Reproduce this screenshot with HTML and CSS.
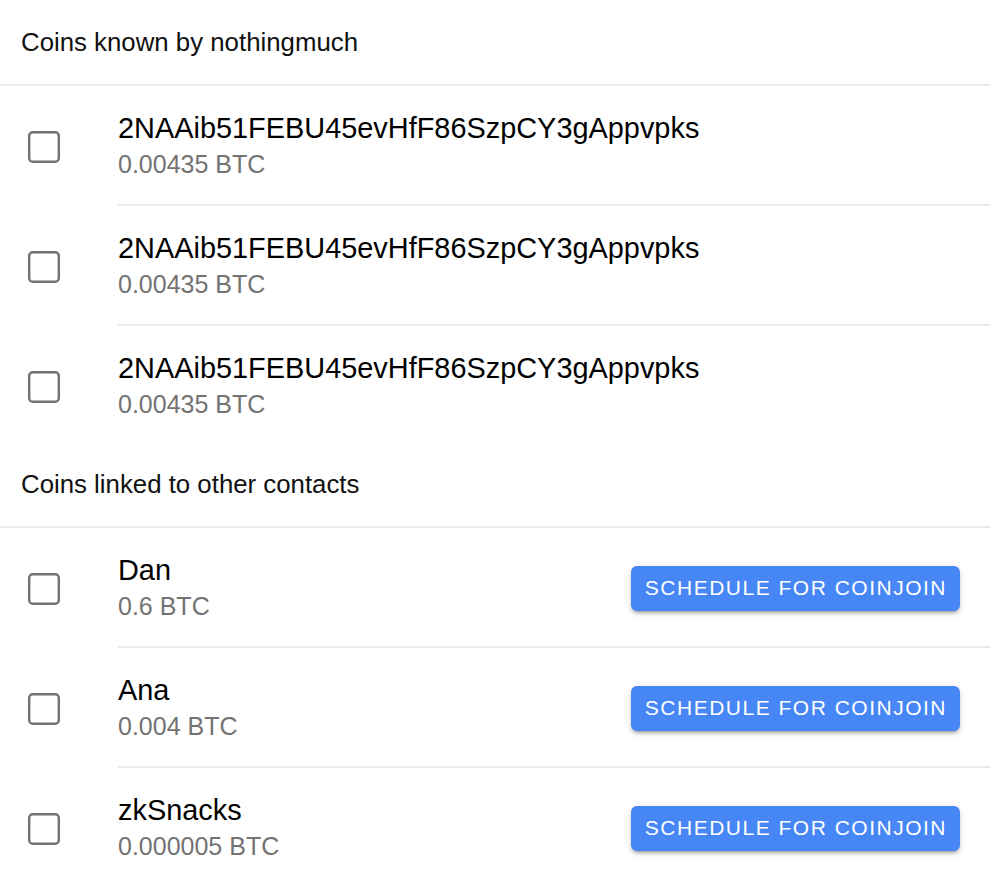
FILE: index.html
```html
<!DOCTYPE html>
<html lang="en">
<head>
<meta charset="utf-8">
<title>Coins</title>
<link rel="stylesheet" href="styles.css">
</head>
<body>
<div class="page">
  <section class="group group--first">
    <div class="subheader">Coins known by nothingmuch</div>
    <ul class="list">
      <li class="item">
        <div class="item-check"><svg class="checkbox" viewBox="0 0 32 32" width="32" height="32"><rect x="1.2" y="1.2" width="29.6" height="29.6" rx="3.5" ry="3.5"/></svg></div>
        <div class="item-body">
          <div class="item-text">
            <div class="primary">2NAAib51FEBU45evHfF86SzpCY3gAppvpks</div>
            <div class="secondary">0.00435 BTC</div>
          </div>
        </div>
      </li>
      <li class="item">
        <div class="item-check"><svg class="checkbox" viewBox="0 0 32 32" width="32" height="32"><rect x="1.2" y="1.2" width="29.6" height="29.6" rx="3.5" ry="3.5"/></svg></div>
        <div class="item-body">
          <div class="item-text">
            <div class="primary">2NAAib51FEBU45evHfF86SzpCY3gAppvpks</div>
            <div class="secondary">0.00435 BTC</div>
          </div>
        </div>
      </li>
      <li class="item">
        <div class="item-check"><svg class="checkbox" viewBox="0 0 32 32" width="32" height="32"><rect x="1.2" y="1.2" width="29.6" height="29.6" rx="3.5" ry="3.5"/></svg></div>
        <div class="item-body">
          <div class="item-text">
            <div class="primary">2NAAib51FEBU45evHfF86SzpCY3gAppvpks</div>
            <div class="secondary">0.00435 BTC</div>
          </div>
        </div>
      </li>
    </ul>
  </section>
  <section class="group">
    <div class="subheader">Coins linked to other contacts</div>
    <ul class="list">
      <li class="item">
        <div class="item-check"><svg class="checkbox" viewBox="0 0 32 32" width="32" height="32"><rect x="1.2" y="1.2" width="29.6" height="29.6" rx="3.5" ry="3.5"/></svg></div>
        <div class="item-body">
          <div class="item-text">
            <div class="primary">Dan</div>
            <div class="secondary">0.6 BTC</div>
          </div>
          <button class="action">Schedule for coinjoin</button>
        </div>
      </li>
      <li class="item">
        <div class="item-check"><svg class="checkbox" viewBox="0 0 32 32" width="32" height="32"><rect x="1.2" y="1.2" width="29.6" height="29.6" rx="3.5" ry="3.5"/></svg></div>
        <div class="item-body">
          <div class="item-text">
            <div class="primary">Ana</div>
            <div class="secondary">0.004 BTC</div>
          </div>
          <button class="action">Schedule for coinjoin</button>
        </div>
      </li>
      <li class="item">
        <div class="item-check"><svg class="checkbox" viewBox="0 0 32 32" width="32" height="32"><rect x="1.2" y="1.2" width="29.6" height="29.6" rx="3.5" ry="3.5"/></svg></div>
        <div class="item-body">
          <div class="item-text">
            <div class="primary">zkSnacks</div>
            <div class="secondary">0.000005 BTC</div>
          </div>
          <button class="action">Schedule for coinjoin</button>
        </div>
      </li>
    </ul>
  </section>
</div>
</body>
</html>
```
FILE: styles.css
```css
html, body {
  margin: 0;
  padding: 0;
  background: #ffffff;
}

body {
  font-family: "Liberation Sans", Arial, Helvetica, sans-serif;
  color: #000000;
}

.page {
  width: 990px;
}

.group--first {
  padding-top: 4px;
}

.subheader {
  font-size: 25.8px;
  line-height: 77px;
  padding: 0 0 3px 21px;
  color: #111111;
  border-bottom: 2px solid #ebebeb;
}

.list {
  list-style: none;
  margin: 0;
  padding: 0;
}

.item {
  display: flex;
  height: 120px;
}

.item-check {
  width: 118px;
  flex: 0 0 118px;
  display: flex;
  align-items: center;
}

.checkbox {
  display: block;
  margin-left: 28px;
  margin-top: 2px;
  fill: none;
  stroke: #737373;
  stroke-width: 2.4;
}

.item-body {
  flex: 1;
  display: flex;
  align-items: center;
  justify-content: space-between;
  padding-right: 30px;
  border-bottom: 2px solid #ebebeb;
}

.item:last-child .item-body {
  border-bottom-color: transparent;
}

.item-text {
  display: flex;
  flex-direction: column;
  padding-top: 2px;
}

.primary {
  font-size: 28.9px;
  line-height: 36px;
  color: #000000;
}

.secondary {
  font-size: 25px;
  line-height: 36px;
  color: #737373;
}

.action {
  font-family: "Liberation Sans", Arial, Helvetica, sans-serif;
  font-size: 21px;
  letter-spacing: 1.5px;
  text-transform: uppercase;
  color: #ffffff;
  background: #4686f5;
  border: none;
  border-radius: 6px;
  height: 45px;
  padding: 0 13px 0 14px;
  margin-top: 2px;
  box-shadow: 0 4px 2px -3px rgba(0, 0, 0, 0.2), 0 3px 3px 0 rgba(0, 0, 0, 0.14), 0 2px 8px 0 rgba(0, 0, 0, 0.12);
  cursor: pointer;
}
```
